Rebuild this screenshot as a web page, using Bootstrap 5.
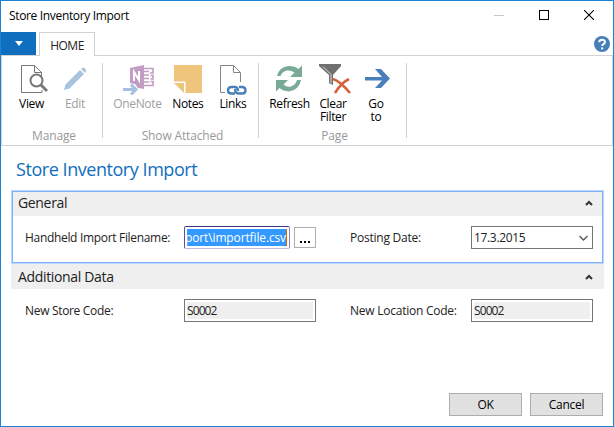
<!DOCTYPE html>
<html lang="en">
<head>
<meta charset="utf-8">
<meta name="viewport" content="width=device-width, initial-scale=1">
<title>Store Inventory Import</title>
<link href="https://cdn.jsdelivr.net/npm/bootstrap@5.3.0/dist/css/bootstrap.min.css" rel="stylesheet">
<style>
body{font-family:"Open Sans","Noto Sans",sans-serif;font-size:12px;line-height:16px;letter-spacing:-.34px;color:#222;background:#fff;overflow:hidden}
svg{display:block;flex:none}
.window{width:614px;height:427px;border:1px solid #1883d7}
.titlebar{height:31px;padding:0 18px 3px 8px;color:#000}
.titlebar>span{padding-top:2px}
.win-controls{gap:35px;padding-right:1px}
.tabs{height:24px;padding-right:3px;border-bottom:1px solid #d2d2d2}
.app-menu{width:35px;height:23px;background:#106ebe;border:0;border-radius:0;padding:0}
.home-tab{width:56px;height:24px;margin-left:3px;border:1px solid #d2d2d2;border-bottom:0;background:#fff;color:#222;padding-top:5px;letter-spacing:-.5px}
.ribbon{height:90px;border:1px solid #d2d2d2;border-top:0;padding-top:7px}
.group{height:75px;border-right:1px solid #d2d2d2}
.group-name{color:#999;height:12px;line-height:12px;margin-top:auto;margin-bottom:-4px;letter-spacing:-.15px}
.tools{height:61px}
.tool{color:#000;line-height:13px;white-space:nowrap}
.tool svg{margin-bottom:4px}
.tool svg.tall{margin-bottom:2px}
.tool-off{color:#a0a0a0}
.page-title{color:#106ebe;font-size:18px;line-height:26px;height:44px;padding:10px 0 0 15px;letter-spacing:-.45px}
.fast-tabs{margin:0 9px 0 10px}
.fast-tab{height:74px;border:1px solid transparent}
.fast-tab.active{border-color:#bcd6ff;box-shadow:inset 0 0 0 1px #7eb1f8}
.fast-head{height:24px;background:#efefef;font-size:14px;padding:0 9px 2px 5px;margin:1px 1px 0}
.fast-tab.plain .fast-head{margin:-1px -1px 0;padding:1px 11px 0 7px;height:25px}
.fields{padding:10px 9px 0 13px}
.field-label{width:159px;letter-spacing:-.32px}
.field-label.second{width:121px;margin-left:34px;letter-spacing:-.24px}
.field{height:23px;border:1px solid #767676;border-radius:0;background:#fff;padding:2px}
.field-inner{height:17px;line-height:17px}
.readonly .field-inner{background:#efefef;letter-spacing:-.9px}
.w-code{width:132px}.w-date{width:122px}.w-file{width:106px}
.field.w-file{border-color:#42318b #8c83b8 #c2bbdc #5c4f99;border-radius:2px}
.picked{background:#3399ff;color:#fff;border-right:1px solid #d06a00;letter-spacing:-.13px}
.browse{width:22px;height:21px;border:1px solid #adadad;background:#fff;margin-left:4px;gap:2px;padding-bottom:4px}
.browse i{width:2px;height:2px;background:#000}
.actions{margin-top:auto;padding:0 10px 10px;gap:8px}
.action{width:73px;height:23px;border:1px solid #adadad;border-radius:0;background:#e1e1e1;color:#000;letter-spacing:-.3px;padding:0}
</style>
</head>
<body>
<div class="window d-flex flex-column">
  <header class="titlebar d-flex align-items-center justify-content-between">
    <span>Store Inventory Import</span>
    <div class="win-controls d-flex">
      <svg width="10" height="10"><path d="M0 5.5H10" stroke="#c8c8c8"/></svg>
      <svg width="10" height="10"><rect x=".5" y=".5" width="9" height="9" fill="none" stroke="#000"/></svg>
      <svg width="10" height="10"><path d="M0 0L10 10M10 0L0 10" stroke="#000" stroke-width="1.1"/></svg>
    </div>
  </header>
  <nav class="tabs d-flex">
    <button class="app-menu d-flex align-items-center justify-content-center"><svg width="8" height="5"><path d="M0 0H8L4 5Z" fill="#fff"/></svg></button>
    <div class="home-tab text-center">HOME</div>
    <svg class="ms-auto mt-1" width="16" height="16"><circle cx="8" cy="8" r="8" fill="#477fb9"/><path d="M5.2 6.2C5.2 2.8 11 2.9 11 6.1C11 8 8.2 7.8 8.2 10" fill="none" stroke="#fff" stroke-width="2"/><path d="M7.2 11.4h2v2h-2z" fill="#fff"/></svg>
  </nav>
  <section class="ribbon d-flex">
    <div class="group d-flex flex-column" style="width:101px">
      <div class="tools d-flex">
        <div class="tool d-flex flex-column align-items-center" style="width:59px">
          <svg class="ms-1" width="30" height="30"><path d="M21.500 29.500H2.500V2.500H15.500L22.500 9.500V13M15.500 3V9.500H22" fill="none" stroke="#777"/><path d="M13 11h13l2 17h-5l-3-2z" fill="#fff"/><path d="M22.500 13V9.500M20.500 29.500H23V27" fill="none" stroke="#777"/><circle cx="17.500" cy="17.500" r="6" fill="#fff" stroke="#777" stroke-width="2"/><path d="M22 22L28 28" stroke="#777" stroke-width="2.800"/></svg>
          View</div>
        <div class="tool tool-off d-flex flex-column align-items-center" style="width:28px">
          <svg width="24" height="30"><path d="M1 27L2.500 21.500L17 7L21 11L6.500 25.500Z" fill="#a9c3df"/><path d="M18 6L20 4.500Q23 5 23 8L22 10Z" fill="#a9c3df"/></svg>
          Edit</div>
      </div>
      <div class="group-name text-center ms-1">Manage</div>
    </div>
    <div class="group d-flex flex-column" style="width:156px">
      <div class="tools d-flex">
        <div class="tool tool-off d-flex flex-column align-items-center" style="width:71px">
          <svg class="tall ms-1" width="32" height="32"><path d="M7 5L21 2V26L15 25L12 21L7 20Z" fill="#c29cc3"/><path d="M21 5.500H30V10H27M21 8.500H26M21 12H26M21 15.500H26M21 19H26M27.500 12.500H30V16H27.500M27.500 18.500H30V22.500H21" fill="none" stroke="#c29cc3" stroke-width="1.600"/><path d="M11 18V9L16 17V8" stroke="#fff" stroke-width="2" fill="none"/><path d="M0 26.500H13M8 21.500L13 26.500L8 31.500" fill="none" stroke="#a6c0de" stroke-width="3"/></svg>
          OneNote</div>
        <div class="tool d-flex flex-column align-items-center" style="width:28px">
          <svg class="ms-1" width="28" height="30"><path d="M0 2H28V30H11.500V18.500H0Z" fill="#eec57a"/><path d="M0 20H10V30Z" fill="#eec57a"/></svg>
          <span class="ms-1">Notes</span></div>
        <div class="tool d-flex flex-column align-items-center" style="width:60px">
          <svg class="tall ms-2" width="28" height="32"><path d="M6 29.500H1.500V2.500H14.500L21.500 9.500V19M14.500 3V9.500H21" fill="none" stroke="#858585"/><g fill="none" stroke="#4a80b9" stroke-width="2.400"><path d="M16 30.500H12.500Q9 30.500 9 27.500Q9 24 12.500 24H15.500Q19 24 19 28"/><path d="M20 24H23Q26.500 24 26.500 27.500Q26.500 30.500 23 30.500H20Q16 30.500 16 26"/></g></svg>
          <span class="ms-2">Links</span></div>
      </div>
      <div class="group-name text-center ms-1">Show Attached</div>
    </div>
    <div class="group d-flex flex-column" style="width:148px">
      <div class="tools d-flex">
        <div class="tool d-flex flex-column align-items-center" style="width:63px">
          <svg width="28" height="30"><g fill="#79aa95"><path d="M2 13Q4 4 13.500 3Q20 3 23.500 6L27 2.500V14H15L19.500 9.500Q16 7 12 7.500Q7 8.500 5.500 13Z"/><path d="M26 17Q24 27 14 28.500Q7.500 28 4.500 25L1 28.500V17H13L8.500 21.500Q12 24.500 16 23.500Q20.500 22 22 17Z"/></g></svg>
          Refresh</div>
        <div class="tool text-center d-flex flex-column align-items-center" style="width:26px">
          <svg class="tall ms-1" width="32" height="32"><path d="M0 1H22V3L14 12V22L10 20V12L0 3Z" fill="#707070"/><path d="M4 3.500L12 11.500V20" fill="none" stroke="#ddd"/><path d="M14 16Q21 18 31 30M30 16Q22 20 16 30" fill="none" stroke="#d9603c" stroke-width="2.600"/></svg>
          <span>Clear</span><span>Filter</span></div>
        <div class="tool text-center d-flex flex-column align-items-center" style="width:62px">
          <svg class="ms-1" width="26" height="30"><path d="M0 14H17L10 6H16L25 15.500L16 25H10L17 17.500H0Z" fill="#4a80b9"/></svg>
          <span>Go</span><span>to</span></div>
      </div>
      <div class="group-name text-center ms-1">Page</div>
    </div>
  </section>
  <h1 class="page-title mb-0 fw-normal">Store Inventory Import</h1>
  <main class="fast-tabs">
    <section class="fast-tab active">
      <div class="fast-head d-flex align-items-center justify-content-between">General<svg width="8" height="6"><path d="M1 5L4 2L7 5" fill="none" stroke="#333" stroke-width="2"/></svg></div>
      <div class="fields d-flex align-items-center">
        <span class="field-label">Handheld Import Filename:</span>
        <div class="field w-file"><div class="field-inner picked d-flex justify-content-end">port\importfile.csv</div></div>
        <div class="browse d-flex align-items-end justify-content-center"><i></i><i></i><i></i></div>
        <span class="field-label second">Posting Date:</span>
        <div class="field w-date d-flex align-items-center justify-content-between"><span>17.3.2015</span><svg width="12" height="8"><path d="M1.500 2L5.500 6L9.500 2" fill="none" stroke="#555" stroke-width="1.300"/></svg></div>
      </div>
    </section>
    <section class="fast-tab plain">
      <div class="fast-head d-flex align-items-center justify-content-between">Additional Data<svg width="8" height="6"><path d="M1 5L4 2L7 5" fill="none" stroke="#333" stroke-width="2"/></svg></div>
      <div class="fields d-flex align-items-center">
        <span class="field-label">New Store Code:</span>
        <div class="field readonly w-code"><div class="field-inner">S0002</div></div>
        <span class="field-label second">New Location Code:</span>
        <div class="field readonly w-date"><div class="field-inner">S0002</div></div>
      </div>
    </section>
  </main>
  <footer class="actions d-flex justify-content-end">
    <button class="action">OK</button>
    <button class="action">Cancel</button>
  </footer>
</div>
<script src="https://cdn.jsdelivr.net/npm/bootstrap@5.3.0/dist/js/bootstrap.bundle.min.js"></script>
</body>
</html>
